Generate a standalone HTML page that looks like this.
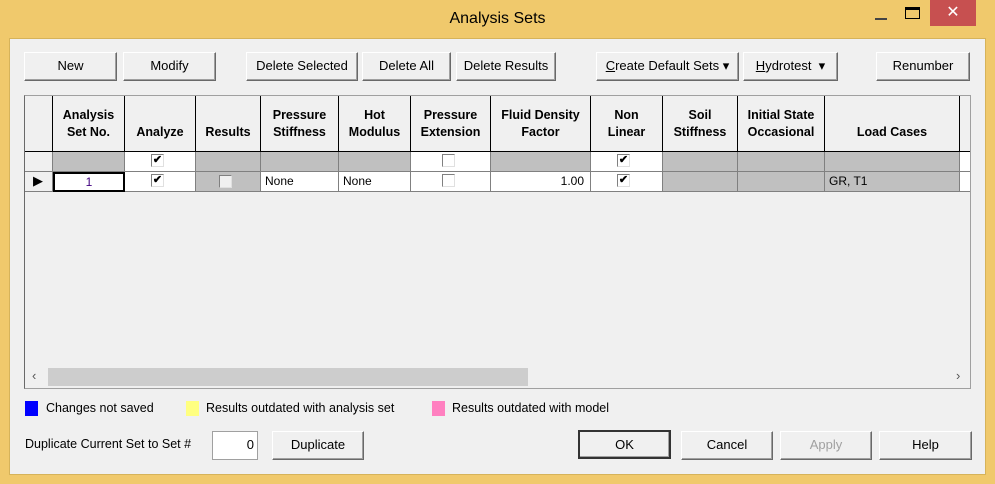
<!DOCTYPE html>
<html><head><style>
*{box-sizing:border-box;margin:0;padding:0}
body{width:995px;height:484px;background:#f0c96c;position:relative;overflow:hidden;font-family:"Liberation Sans",sans-serif;font-size:13px;color:#000}
.a{position:absolute}
.client{left:9px;top:38px;width:977px;height:437px;background:#f0f0f0;border:1px solid #d6b35a}
.btn{position:absolute;height:29px;background:#f0f0f0;border:1px solid;border-color:#fff #696969 #696969 #fff;box-shadow:inset -1px -1px 0 #a0a0a0;text-align:center;line-height:26px;font-size:13px;white-space:nowrap}
.grid{left:24px;top:95px;width:947px;height:294px;background:#f0f0f0;border:1px solid #a0a0a0;border-left:1px solid #696969;overflow:hidden}
.c{position:absolute;border-right:1px solid #000;border-bottom:1px solid #000;font-weight:bold;text-align:center;font-size:12.5px;line-height:17px;display:flex;align-items:flex-end;justify-content:center;padding-bottom:10px}
.r{position:absolute;border-right:1px solid #808080;border-bottom:1px solid #808080;font-size:12px;line-height:18px;padding-left:4px}
.g{background:#c0c0c0}.w{background:#fff}
.cb{position:absolute;width:13px;height:13px;border:1px solid #808080;border-right-color:#e0e0e0;border-bottom-color:#e0e0e0;background:#fff;font-size:11px;line-height:11px;text-align:center;font-weight:bold}
</style></head><body>
<div class="a" style="left:0;top:10px;width:995px;text-align:center;font-size:16px;color:#000">Analysis Sets</div>
<div class="a" style="left:875px;top:18px;width:12px;height:2px;background:#444"></div>
<div class="a" style="left:905px;top:7px;width:15px;height:12px;border:1px solid #000;border-top-width:3px"></div>
<div class="a" style="left:930px;top:0;width:46px;height:26px;background:#c75050;color:#fff;text-align:center;font-size:16px;line-height:26px">✕</div>
<div class="a client"></div>

<div class="btn" style="left:24px;top:52px;width:93px">New</div>
<div class="btn" style="left:123px;top:52px;width:93px">Modify</div>
<div class="btn" style="left:246px;top:52px;width:112px">Delete Selected</div>
<div class="btn" style="left:362px;top:52px;width:89px">Delete All</div>
<div class="btn" style="left:456px;top:52px;width:100px">Delete Results</div>
<div class="btn" style="left:596px;top:52px;width:143px"><u>C</u>reate Default Sets ▾</div>
<div class="btn" style="left:743px;top:52px;width:95px"><u>H</u>ydrotest&nbsp; ▾</div>
<div class="btn" style="left:876px;top:52px;width:94px">Renumber</div>

<div class="a grid">
<div class="c" style="left:0;top:0;width:28px;height:56px"></div>
<div class="c" style="left:28px;top:0;width:72px;height:56px">Analysis<br>Set No.</div>
<div class="c" style="left:100px;top:0;width:71px;height:56px">Analyze</div>
<div class="c" style="left:171px;top:0;width:65px;height:56px">Results</div>
<div class="c" style="left:236px;top:0;width:78px;height:56px">Pressure<br>Stiffness</div>
<div class="c" style="left:314px;top:0;width:72px;height:56px">Hot<br>Modulus</div>
<div class="c" style="left:386px;top:0;width:80px;height:56px">Pressure<br>Extension</div>
<div class="c" style="left:466px;top:0;width:100px;height:56px">Fluid Density<br>Factor</div>
<div class="c" style="left:566px;top:0;width:72px;height:56px">Non<br>Linear</div>
<div class="c" style="left:638px;top:0;width:75px;height:56px">Soil<br>Stiffness</div>
<div class="c" style="left:713px;top:0;width:87px;height:56px">Initial State<br>Occasional</div>
<div class="c" style="left:800px;top:0;width:135px;height:56px">Load Cases</div>
<div class="c" style="left:935px;top:0;width:20px;height:56px;border-right:none"></div>

<div class="r" style="left:0;top:56px;width:28px;height:20px"></div>
<div class="r g" style="left:28px;top:56px;width:72px;height:20px"></div>
<div class="r w" style="left:100px;top:56px;width:71px;height:20px"><div class="cb" style="left:26px;top:2px">✔</div></div>
<div class="r g" style="left:171px;top:56px;width:65px;height:20px"></div>
<div class="r g" style="left:236px;top:56px;width:78px;height:20px"></div>
<div class="r g" style="left:314px;top:56px;width:72px;height:20px"></div>
<div class="r w" style="left:386px;top:56px;width:80px;height:20px"><div class="cb" style="left:31px;top:2px"></div></div>
<div class="r g" style="left:466px;top:56px;width:100px;height:20px"></div>
<div class="r w" style="left:566px;top:56px;width:72px;height:20px"><div class="cb" style="left:26px;top:2px">✔</div></div>
<div class="r g" style="left:638px;top:56px;width:75px;height:20px"></div>
<div class="r g" style="left:713px;top:56px;width:87px;height:20px"></div>
<div class="r g" style="left:800px;top:56px;width:135px;height:20px"></div>
<div class="r w" style="left:935px;top:56px;width:20px;height:20px"></div>

<div class="r" style="left:0;top:76px;width:28px;height:20px;font-size:13px;padding-left:8px">▶</div>
<div class="r w" style="left:28px;top:76px;width:72px;height:20px;border:2px solid #000;text-align:center;padding:0;line-height:16px;color:#400080">1</div>
<div class="r w" style="left:100px;top:76px;width:71px;height:20px"><div class="cb" style="left:26px;top:2px">✔</div></div>
<div class="r g" style="left:171px;top:76px;width:65px;height:20px"><div class="cb" style="left:23px;top:3px;background:#f0f0f0"></div></div>
<div class="r w" style="left:236px;top:76px;width:78px;height:20px">None</div>
<div class="r w" style="left:314px;top:76px;width:72px;height:20px">None</div>
<div class="r w" style="left:386px;top:76px;width:80px;height:20px"><div class="cb" style="left:31px;top:2px"></div></div>
<div class="r w" style="left:466px;top:76px;width:100px;height:20px;text-align:right;padding-right:6px">1.00</div>
<div class="r w" style="left:566px;top:76px;width:72px;height:20px"><div class="cb" style="left:26px;top:2px">✔</div></div>
<div class="r g" style="left:638px;top:76px;width:75px;height:20px"></div>
<div class="r g" style="left:713px;top:76px;width:87px;height:20px"></div>
<div class="r g" style="left:800px;top:76px;width:135px;height:20px">GR, T1</div>
<div class="r w" style="left:935px;top:76px;width:20px;height:20px"></div>

<div class="a" style="left:0;top:271px;width:945px;height:20px;background:#f0f0f0"></div>
<div class="a" style="left:23px;top:272px;width:480px;height:18px;background:#cdcdcd"></div>
<div class="a" style="left:7px;top:272px;font-size:13px;color:#555">‹</div>
<div class="a" style="left:931px;top:272px;font-size:13px;color:#555">›</div>
</div>

<div class="a" style="left:25px;top:401px;width:13px;height:15px;background:#0000ff"></div>
<div class="a" style="left:46px;top:401px;font-size:12.5px">Changes not saved</div>
<div class="a" style="left:186px;top:401px;width:13px;height:15px;background:#ffff80"></div>
<div class="a" style="left:206px;top:401px;font-size:12.5px">Results outdated with analysis set</div>
<div class="a" style="left:432px;top:401px;width:13px;height:15px;background:#ff80c0"></div>
<div class="a" style="left:452px;top:401px;font-size:12.5px">Results outdated with model</div>

<div class="a" style="left:25px;top:437px;font-size:12.5px">Duplicate Current Set to Set #</div>
<div class="a" style="left:212px;top:431px;width:46px;height:29px;background:#fff;border:1px solid #a0a0a0;text-align:right;padding-right:3px;line-height:26px">0</div>
<div class="btn" style="left:272px;top:431px;width:92px">Duplicate</div>
<div class="btn" style="left:578px;top:430px;width:93px;border:2px solid #333;line-height:25px">OK</div>
<div class="btn" style="left:681px;top:431px;width:92px">Cancel</div>
<div class="btn" style="left:780px;top:431px;width:92px;color:#a0a0a0">Apply</div>
<div class="btn" style="left:879px;top:431px;width:93px">Help</div>
</body></html>
